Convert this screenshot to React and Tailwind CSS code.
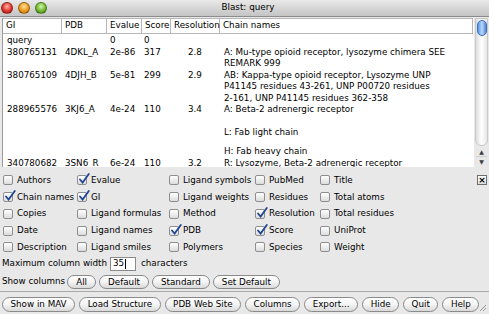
import React from 'react';

const rows = [
  { gi: 'query', pdb: '', ev: '0', sc: '0', res: '', chain: [''] },
  {
    gi: '380765131', pdb: '4DKL_A', ev: '2e-86', sc: '317', res: '2.8',
    chain: ['A: Mu-type opioid receptor, lysozyme chimera SEE', 'REMARK 999'],
  },
  {
    gi: '380765109', pdb: '4DJH_B', ev: '5e-81', sc: '299', res: '2.9',
    chain: [
      'AB: Kappa-type opioid receptor, Lysozyme UNP',
      'P41145 residues 43-261, UNP P00720 residues',
      '2-161, UNP P41145 residues 362-358',
    ],
  },
  {
    gi: '288965576', pdb: '3KJ6_A', ev: '4e-24', sc: '110', res: '3.4',
    chain: ['A: Beta-2 adrenergic receptor', 'gap1', 'L: Fab light chain', 'gap2', 'H: Fab heavy chain'],
  },
  {
    gi: '340780682', pdb: '3SN6_R', ev: '6e-24', sc: '110', res: '3.2',
    chain: ['R: Lysozyme, Beta-2 adrenergic receptor'],
  },
];

const boxes = [
  ['Authors', false], ['Chain names', true], ['Copies', false], ['Date', false], ['Description', false],
  ['Evalue', true], ['GI', true], ['Ligand formulas', false], ['Ligand names', false], ['Ligand smiles', false],
  ['Ligand symbols', false], ['Ligand weights', false], ['Method', false], ['PDB', true], ['Polymers', false],
  ['PubMed', false], ['Residues', false], ['Resolution', true], ['Score', true], ['Species', false],
  ['Title', false], ['Total atoms', false], ['Total residues', false], ['UniProt', false], ['Weight', false],
];

function Check({ on, label }) {
  return (
    <div className="flex items-center gap-[4px]">
      <span className="relative w-[10px] h-[10px] shrink-0 rounded-[2px] border border-[#8e8e8e] bg-linear-to-b from-white to-[#dcdcdc]">
        {on && (
          <svg className="absolute -top-[3px] left-[0px] w-[12px] h-[12px]" viewBox="0 0 12 12">
            <path d="M2 6.5 L4.6 9.6 L10.8 1" stroke="#21468f" strokeWidth="1.8" fill="none" strokeLinecap="round" />
          </svg>
        )}
      </span>
      <span className="whitespace-nowrap">{label}</span>
    </div>
  );
}

function Pill({ children, tall }) {
  return (
    <button
      className={`${tall ? 'h-[15px] px-[7.5px]' : 'h-[14px] px-[8px]'} rounded-full border border-[#8a8a8a] bg-linear-to-b from-white via-[#f4f4f4] to-[#d9d9d9] whitespace-nowrap leading-none text-black`}
    >
      {children}
    </button>
  );
}

function Light({ color }) {
  return <span className={`w-[12px] h-[12px] rounded-full border border-black/30 ${color}`} />;
}

export default function App() {
  const cols = 'grid grid-cols-[59px_45px_35px_29px_49px_1fr]';
  return (
    <div className="w-[489px] h-[314px] overflow-hidden bg-[#e8e8e8] flex flex-col font-['DejaVu_Sans',sans-serif] text-[8.75px] text-black">
      {/* title bar */}
      <div className="relative h-[17px] shrink-0 flex items-center border-b border-[#8c8c8c] bg-linear-to-b from-[#e9e9e9] to-[#c4c4c4]">
        <div className="flex gap-[5px] pl-[1px]">
          <Light color="bg-[radial-gradient(circle_at_50%_35%,#ffb2a8,#e0362b_55%,#9c1710)]" />
          <Light color="bg-[radial-gradient(circle_at_50%_35%,#ffe0a0,#eb9a1c_55%,#a5600a)]" />
          <Light color="bg-[radial-gradient(circle_at_50%_35%,#d7f5a8,#6fb930_55%,#3d7a13)]" />
        </div>
        <div className="flex-1 text-center pr-[40px] text-[8.8px]">Blast: query</div>
      </div>

      {/* table */}
      <div className="h-[150px] shrink-0 flex">
        <div className="flex-1 ml-[2px] mt-[1px] bg-white border-l border-[#9b9b9b] overflow-hidden">
          <div className={`${cols} h-[16px] items-center`}>
            {['GI', 'PDB', 'Evalue', 'Score', 'Resolution', 'Chain names'].map((h, i) => (
              <div key={h} className={`h-full flex items-center pl-[3px] border-t border-b border-r border-[#b7b7b7] ${i === 5 ? 'mr-[1px]' : ''}`}>
                {h}
              </div>
            ))}
          </div>
          <div className="pt-[1px] leading-[11.5px]">
            {rows.map((r) => (
              <div key={r.gi} className={cols}>
                <div className="pl-[4px]">{r.gi}</div>
                <div className="pl-[3px]">{r.pdb}</div>
                <div className="pl-[3px]">{r.ev}</div>
                <div className="pl-[2px]">{r.sc}</div>
                <div className="pl-[17px]">{r.res}</div>
                <div className="pl-[4px]">
                  {r.chain.map((c) =>
                    c === 'gap1' ? (
                      <div key={c} className="h-[11px]" />
                    ) : c === 'gap2' ? (
                      <div key={c} className="h-[8px]" />
                    ) : (
                      <div key={c} className="whitespace-nowrap h-[11.5px]">{c}</div>
                    )
                  )}
                </div>
              </div>
            ))}
          </div>
        </div>
        {/* scrollbar */}
        <div className="w-[15px] shrink-0 flex flex-col items-center pt-[1px] bg-[#e8e8e8]">
          <div className="w-[13px] h-[128px] rounded-b-[6px] border border-[#c9c9c9] bg-linear-to-r from-[#dedede] via-white to-[#e6e6e6] flex justify-center pt-[1px]">
            <div className="w-[10px] h-[16px] rounded-full border border-[#3f6fb6] bg-linear-to-r from-[#5b94e2] via-[#bcd9fb] to-[#4d87d8]" />
          </div>
          <div className="w-[13px] flex-1 flex flex-col items-center justify-end text-[#3b3b3b] text-[6px] leading-[9px] pb-[1px]">
            <div>▲</div>
            <div className="w-[11px] border-t border-[#cfcfcf]" />
            <div>▼</div>
          </div>
        </div>
      </div>

      {/* column checkboxes */}
      <div className="flex mt-[5px] h-[84px] shrink-0">
        <div className="grid grid-flow-col grid-rows-[repeat(5,16.75px)] grid-cols-[74px_92px_86px_65px_120px] pl-[3px] items-center">
          {boxes.map(([l, on]) => (
            <Check key={l} label={l} on={on} />
          ))}
        </div>
        <div className="flex-1 flex justify-end pr-[2px] pt-[3px]">
          <div className="w-[10px] h-[10px] border border-[#6d6d6d] bg-linear-to-b from-white to-[#dedede] flex items-center justify-center text-[9px] leading-none font-bold">
            ×
          </div>
        </div>
      </div>

      {/* max column width */}
      <div className="flex items-center h-[16px] pl-[2px] gap-[3px]">
        <span>Maximum column width</span>
        <span className="h-[14px] w-[26px] bg-white border border-[#8a8a8a] flex items-center pl-[2px]">
          35<span className="ml-[1px] w-px h-[10px] bg-black" />
        </span>
        <span className="ml-[2px]">characters</span>
      </div>

      {/* show columns */}
      <div className="flex items-center h-[16px] pl-[2px] gap-[3px] mt-[2px]">
        <span className="mr-[-1px]">Show columns</span>
        <Pill>All</Pill>
        <Pill>Default</Pill>
        <Pill>Standard</Pill>
        <Pill>Set Default</Pill>
      </div>

      <div className="mt-[1px] h-px bg-[#a8a8a8]" />

      {/* bottom buttons */}
      <div className="relative flex items-center gap-[4px] pl-[2px] mt-[5px]">
        <Pill tall>Show in MAV</Pill>
        <Pill tall>Load Structure</Pill>
        <Pill tall>PDB Web Site</Pill>
        <Pill tall>Columns</Pill>
        <Pill tall>Export...</Pill>
        <Pill tall>Hide</Pill>
        <Pill tall>Quit</Pill>
        <Pill tall>Help</Pill>
        <svg className="absolute right-[2px] top-[6px] w-[9px] h-[9px]" viewBox="0 0 9 9">
          <path d="M8 2 L2 8 M8 5 L5 8" stroke="#9a9a9a" strokeWidth="1" />
        </svg>
      </div>
    </div>
  );
}
